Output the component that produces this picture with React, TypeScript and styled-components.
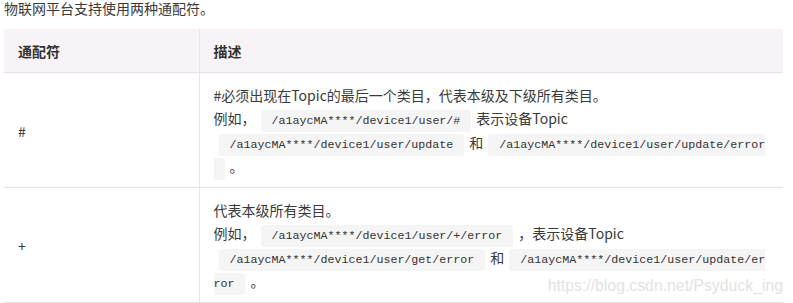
import styled, { createGlobalStyle } from 'styled-components';

const GlobalStyle = createGlobalStyle`
  body {
    margin: 0;
    background: #fff;
    font-family: "Noto Sans CJK SC", "Noto Sans", sans-serif;
    color: #3a3a3a;
  }
`;

const Page = styled.div`
  position: relative;
  width: 793px;
  height: 303px;
  padding: 0 10px 0 4px;
  box-sizing: border-box;
  overflow: hidden;
`;

const Intro = styled.p`
  margin: -1px 0 12px;
  font-size: 14px;
  line-height: 18px;
`;

const Table = styled.table`
  width: 779px;
  border-collapse: collapse;
  table-layout: fixed;
  font-size: 14px;
`;

const HeadCell = styled.th<{ $divider?: boolean }>`
  padding: 11px 13px 10px 14px;
  line-height: 22px;
  text-align: left;
  font-weight: bold;
  color: #333;
  background: #f7f3f6;
  border-bottom: 1px solid #e2e2e2;
  border-left: ${(p) => (p.$divider ? '1px solid #e6e6e6' : 'none')};
`;

const Cell = styled.td<{ $divider?: boolean }>`
  padding: 11px 14px 9px 14px;
  vertical-align: middle;
  border-bottom: 1px solid #e2e2e2;
  border-left: ${(p) => (p.$divider ? '1px solid #e6e6e6' : 'none')};
`;

const Lead = styled.div`
  line-height: 22px;
`;

const Example = styled.div`
  line-height: 24px;
`;

const Code = styled.code`
  margin: 0 5px;
  padding: 4px 4px;
  border-radius: 3px;
  background: #f5f5f5;
  color: #333;
  font-family: "Liberation Mono", monospace;
  font-size: 11.67px;
  line-height: 12px;
  white-space: break-spaces;
  line-break: anywhere;
  word-break: break-all;
`;

const Watermark = styled.div`
  position: absolute;
  right: 10px;
  bottom: 8px;
  font-family: "Liberation Sans", Arial, sans-serif;
  font-size: 15.8px;
  color: #e3e3e3;
`;

export default function App() {
  return (
    <Page>
      <GlobalStyle />
      <Intro>物联网平台支持使用两种通配符。</Intro>
      <Table>
        <colgroup>
          <col style={{ width: 195 }} />
          <col />
        </colgroup>
        <thead>
          <tr>
            <HeadCell>通配符</HeadCell>
            <HeadCell $divider>描述</HeadCell>
          </tr>
        </thead>
        <tbody>
          <tr>
            <Cell>#</Cell>
            <Cell $divider>
              <Lead>#必须出现在Topic的最后一个类目，代表本级及下级所有类目。</Lead>
              <Example>
                例如，<Code> /a1aycMA****/device1/user/# </Code>表示设备Topic
                <br />
                <Code> /a1aycMA****/device1/user/update </Code>和<Code> /a1aycMA****/device1/user/update/error </Code>。
              </Example>
            </Cell>
          </tr>
          <tr>
            <Cell>+</Cell>
            <Cell $divider>
              <Lead>代表本级所有类目。</Lead>
              <Example>
                例如，<Code> /a1aycMA****/device1/user/+/error </Code>，表示设备Topic
                <br />
                <Code> /a1aycMA****/device1/user/get/error </Code>和<Code> /a1aycMA****/device1/user/update/error </Code>。
              </Example>
            </Cell>
          </tr>
        </tbody>
      </Table>
      <Watermark>https://blog.csdn.net/Psyduck_ing</Watermark>
    </Page>
  );
}
